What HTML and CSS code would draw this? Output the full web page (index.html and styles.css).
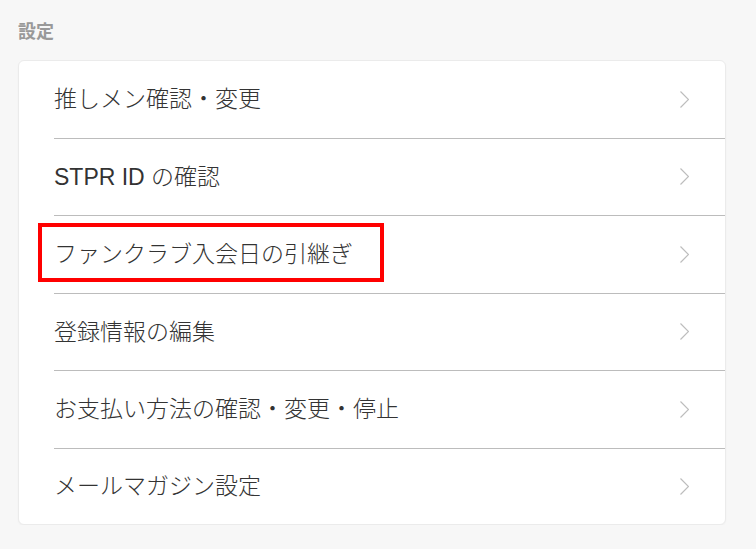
FILE: index.html
```html
<!DOCTYPE html>
<html lang="ja">
<head>
<meta charset="utf-8">
<title>設定</title>
<link rel="stylesheet" href="styles.css">
</head>
<body>
<main class="page">
  <h2 class="section-title">設定</h2>
  <ul class="menu">
    <li class="menu-item"><a class="menu-link" href="#"><span class="label">推しメン確認・変更</span><svg class="chev" width="9" height="17" viewBox="0 0 9 17"><path d="M0.5 0.5 L8.5 8.5 L0.5 16.5" fill="none" stroke="#bdbdbd" stroke-width="1.2"/></svg></a></li>
    <li class="menu-item"><a class="menu-link" href="#"><span class="label">STPR ID の確認</span><svg class="chev" width="9" height="17" viewBox="0 0 9 17"><path d="M0.5 0.5 L8.5 8.5 L0.5 16.5" fill="none" stroke="#bdbdbd" stroke-width="1.2"/></svg></a></li>
    <li class="menu-item"><a class="menu-link" href="#"><span class="label highlight">ファンクラブ入会日の引継ぎ</span><svg class="chev" width="9" height="17" viewBox="0 0 9 17"><path d="M0.5 0.5 L8.5 8.5 L0.5 16.5" fill="none" stroke="#bdbdbd" stroke-width="1.2"/></svg></a></li>
    <li class="menu-item"><a class="menu-link" href="#"><span class="label">登録情報の編集</span><svg class="chev" width="9" height="17" viewBox="0 0 9 17"><path d="M0.5 0.5 L8.5 8.5 L0.5 16.5" fill="none" stroke="#bdbdbd" stroke-width="1.2"/></svg></a></li>
    <li class="menu-item"><a class="menu-link" href="#"><span class="label">お支払い方法の確認・変更・停止</span><svg class="chev" width="9" height="17" viewBox="0 0 9 17"><path d="M0.5 0.5 L8.5 8.5 L0.5 16.5" fill="none" stroke="#bdbdbd" stroke-width="1.2"/></svg></a></li>
    <li class="menu-item"><a class="menu-link" href="#"><span class="label">メールマガジン設定</span><svg class="chev" width="9" height="17" viewBox="0 0 9 17"><path d="M0.5 0.5 L8.5 8.5 L0.5 16.5" fill="none" stroke="#bdbdbd" stroke-width="1.2"/></svg></a></li>
  </ul>
</main>
</body>
</html>
```
FILE: styles.css
```css
html, body {
  margin: 0;
  padding: 0;
  background: #f7f7f7;
}
body {
  font-family: "Liberation Sans", "Noto Sans CJK JP", sans-serif;
  color: #333;
}
.page {
  padding: 20px 30px 0 18px;
}
.section-title {
  margin: 0 0 20px 0;
  font-family: "Noto Sans CJK JP", sans-serif;
  font-size: 18px;
  line-height: 20px;
  font-weight: bold;
  color: #999;
}
.menu {
  list-style: none;
  margin: 0;
  padding: 0 0 0 35px;
  background: #fff;
  border: 1px solid #ebebeb;
  border-radius: 6px;
  box-shadow: 0 1px 2px rgba(0,0,0,0.03);
}
.menu-item {
  height: 77.5px;
  border-bottom: 1px solid #bcbcbc;
  box-sizing: border-box;
}
.menu-item:last-child {
  border-bottom: none;
  height: 75px;
}
.menu-link {
  display: flex;
  align-items: center;
  justify-content: space-between;
  height: 100%;
  padding-right: 36px;
  color: #333;
  text-decoration: none;
}
.label {
  font-size: 23px;
  line-height: 30px;
  font-weight: 300;
}
.chev {
  display: block;
  flex: none;
}
.highlight {
  position: relative;
}
.highlight::after {
  content: "";
  position: absolute;
  left: -16px;
  top: -16px;
  width: 346px;
  height: 59px;
  box-sizing: border-box;
  border: 4px solid #ff0000;
}
```
